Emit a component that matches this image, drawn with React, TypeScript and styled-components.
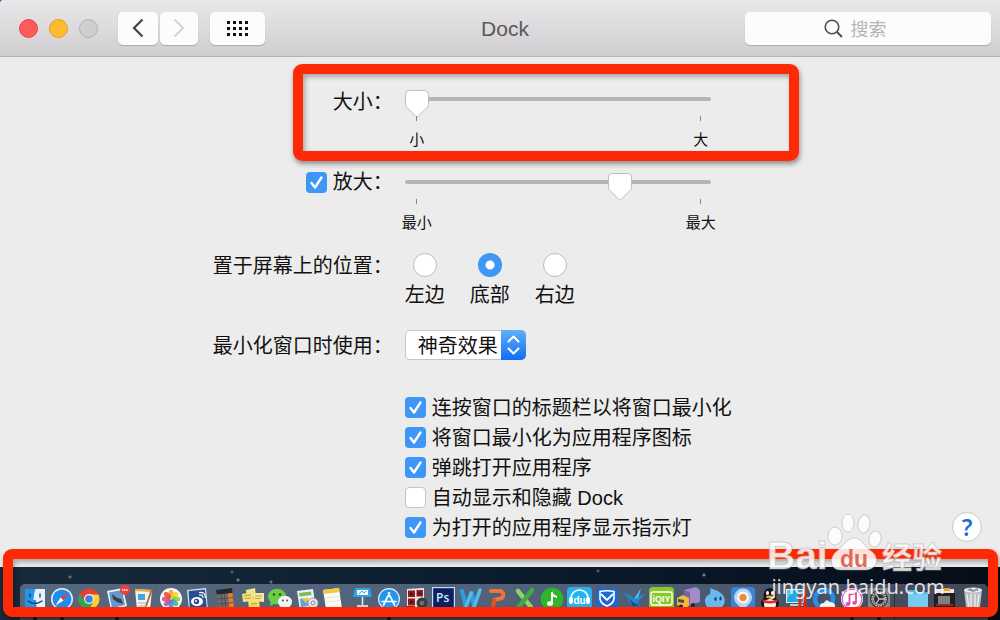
import React, { useState } from "react";
import styled, { createGlobalStyle, css } from "styled-components";

const GlobalStyle = createGlobalStyle`
  *, *::before, *::after { box-sizing: border-box; }
  body { margin: 0; background: #2b4a63; }
  button, input, select { font: inherit; margin: 0; }
`;

const cjk = `"Liberation Sans", "Noto Sans CJK SC", sans-serif`;
const blue = "#3e97f6";
const red = "#fe2a05";

const Page = styled.div`
  display: flex;
  flex-direction: column;
  min-height: 100vh;
  font: 20px/20px ${cjk};
  color: #111;
`;

/* ---------- title bar ---------- */

const TitleBar = styled.header`
  display: grid;
  grid-template-columns: 1fr auto 1fr;
  align-items: center;
  height: 57px;
  padding: 0 9px 0 19px;
  border-bottom: 1px solid #b3b1b3;
  border-top-left-radius: 3px;
  background: linear-gradient(#e9e7e9, #d0ced0);
`;

const BarGroup = styled.div`
  display: flex;
  align-items: center;
`;

const Lights = styled.div`
  display: flex;
  gap: 11px;
  margin-right: 20px;
`;

const Light = styled.button<{ $fill: string; $edge: string }>`
  width: 19px;
  height: 19px;
  padding: 0;
  border: 1px solid ${(p) => p.$edge};
  border-radius: 50%;
  background: ${(p) => p.$fill};
`;

const BarButton = styled.button<{ $width: number; $gap?: number }>`
  display: grid;
  place-items: center;
  width: ${(p) => p.$width}px;
  height: 33px;
  margin-right: ${(p) => p.$gap ?? 0}px;
  padding: 0;
  border: 0;
  border-radius: 5px;
  background: #fcfcfc;
  box-shadow: 0 1px 1px rgba(0, 0, 0, 0.2);
`;

const Title = styled.h1`
  margin: 0;
  padding-top: 2px;
  font-size: 21px;
  font-weight: 400;
  line-height: 24px;
  color: #5a585a;
`;

const Search = styled.label`
  display: flex;
  align-items: center;
  justify-content: center;
  justify-self: end;
  gap: 8px;
  width: 246px;
  height: 33px;
  border-radius: 5px;
  background: #fcfcfc;
  box-shadow: 0 1px 1px rgba(0, 0, 0, 0.2);
`;

const SearchInput = styled.input`
  width: 62px;
  padding: 3px 0 0;
  border: 0;
  outline: 0;
  background: none;
  font-size: 18px;
  line-height: 24px;
  &::placeholder { color: #b4b4b4; opacity: 1; }
`;

/* ---------- settings form ---------- */

const Main = styled.main`
  flex: 1;
  padding: 33px 0 25px;
  background: #ececec;
`;

const Row = styled.div<{ $top?: number }>`
  display: grid;
  grid-template-columns: minmax(0, 2fr) minmax(0, 3fr);
  column-gap: 8px;
  margin-top: ${(p) => p.$top ?? 0}px;
`;

const RowLabel = styled.div<{ $line: number }>`
  display: flex;
  justify-content: flex-end;
  align-items: center;
  gap: 6px;
  height: ${(p) => p.$line}px;
  padding-right: 4px;
  white-space: nowrap;
`;

const Control = styled.div`
  position: relative;
`;

const Mark = styled.div`
  position: absolute;
  border: 10px solid ${red};
  border-radius: 9px;
  box-shadow: 1px 3px 5px rgba(0, 0, 0, 0.4), inset 2px 3px 5px rgba(0, 0, 0, 0.3);
  pointer-events: none;
`;

const SizeMark = styled(Mark)`
  top: -26px;
  left: -112px;
  width: 506px;
  height: 97px;
`;

const thumb = `url("data:image/svg+xml,%3Csvg xmlns='http://www.w3.org/2000/svg' width='24' height='28'%3E%3Cpath d='M4.500.5H19.500Q23.500.5 23.500 4.500V14.500Q23.500 16 22.500 17L13 26.500Q12 27.500 11 26.500L1.500 17Q.5 16 .5 14.500V4.500Q.5.5 4.500.5Z' fill='white' stroke='%23bdbdbd'/%3E%3C/svg%3E")`;

const Range = styled.input`
  display: block;
  width: 306px;
  height: 18px;
  appearance: none;
  background: none;
  &::-webkit-slider-runnable-track {
    height: 4px;
    border-radius: 2px;
    background: #b5b5b5;
  }
  &::-webkit-slider-thumb {
    appearance: none;
    width: 24px;
    height: 28px;
    margin-top: -7px;
    background: ${thumb} no-repeat;
  }
`;

const Scale = styled.div`
  display: flex;
  justify-content: space-between;
  width: 308px;
  margin-top: 8px;
  font-size: 15px;
`;

const ScaleEnd = styled.span`
  display: flex;
  flex-direction: column;
  align-items: center;
  gap: 9px;
  width: 24px;
  white-space: nowrap;
  &::before {
    content: "";
    width: 1px;
    height: 5px;
    background: #858585;
  }
`;

const tick = `url("data:image/svg+xml,%3Csvg xmlns='http://www.w3.org/2000/svg' viewBox='0 0 21 21'%3E%3Cpath d='M5.500 11L9 15.500L15.500 5.500' fill='none' stroke='white' stroke-width='2.400' stroke-linecap='round' stroke-linejoin='round'/%3E%3C/svg%3E")`;

const Check = styled.input`
  flex: none;
  width: 21px;
  height: 21px;
  appearance: none;
  border: 1px solid #c4c4c4;
  border-radius: 4px;
  background: #fff;
  &:checked {
    border: 0;
    background: ${blue} ${tick} center / 21px no-repeat;
  }
`;

const Radios = styled.div`
  display: flex;
  gap: 25px;
`;

const RadioOption = styled.label`
  display: flex;
  flex-direction: column;
  align-items: center;
  gap: 6px;
  line-height: 24px;
`;

const Radio = styled.input`
  width: 24px;
  height: 24px;
  appearance: none;
  border: 1px solid #bcbcbc;
  border-radius: 50%;
  background: #fff;
  &:checked {
    border: 0;
    background: radial-gradient(circle, #fff 4px, ${blue} 5px);
  }
`;

const SelectBox = styled.div`
  position: relative;
  width: 121px;
  height: 30px;
`;

const Select = styled.select`
  width: 100%;
  height: 100%;
  padding: 1px 0 0 12px;
  appearance: none;
  border: 1px solid #c6c6c6;
  border-radius: 5px;
  background: #fff;
  color: #111;
`;

const SelectArrows = styled.span`
  position: absolute;
  inset: 0 0 0 auto;
  display: grid;
  place-items: center;
  width: 25px;
  border-radius: 0 5px 5px 0;
  background: linear-gradient(#62aef8, #0f6ff6);
  pointer-events: none;
`;

const OptionsCell = styled.div`
  display: flex;
  justify-content: space-between;
  align-items: flex-end;
  padding-right: 18px;
`;

const Options = styled.div`
  display: flex;
  flex-direction: column;
`;

const Option = styled.label`
  display: flex;
  align-items: center;
  gap: 6px;
  height: 30px;
`;

const OptionText = styled.span`
  padding-top: 2px;
`;

const Help = styled.button`
  width: 30px;
  height: 30px;
  padding: 0;
  border: 1px solid #c8c8c8;
  border-radius: 50%;
  background: #fff;
  color: #1470d2;
  font: 600 23px/28px "Noto Sans", sans-serif;
`;

/* ---------- desktop and dock ---------- */

const Desktop = styled.footer`
  position: relative;
  padding: 17px 12px 0 20px;
  background:
    radial-gradient(circle at 70px 10px, #5c6f7e 0 1px, transparent 2px),
    radial-gradient(circle at 238px 13px, #6b7c8a 0 1px, transparent 2px),
    radial-gradient(circle at 232px 5px, #465a6a 0 1px, transparent 2px),
    radial-gradient(circle at 271px 15px, #5c6f7e 0 1px, transparent 2px),
    radial-gradient(circle at 704px 8px, #6b7c8a 0 1px, transparent 2px),
    radial-gradient(circle at 598px 4px, #465a6a 0 1px, transparent 2px),
    linear-gradient(90deg, #172a3b, #0b1c2e 50%, #060d18);
`;

const Dock = styled.nav`
  display: flex;
  justify-content: space-between;
  height: 36px;
  padding: 2px 3px 0;
  border-radius: 5px 5px 0 0;
  background:
    linear-gradient(transparent 31px, #4b4152 31px),
    linear-gradient(90deg, #56687e, #4f6078 60%, #414757);
`;

const DockItem = styled.button<{ $running?: boolean }>`
  position: relative;
  display: flex;
  align-items: flex-start;
  width: 24px;
  height: 34px;
  padding: 0;
  border: 0;
  background: none;
  svg { display: block; overflow: visible; }
  ${(p) =>
    p.$running &&
    css`
      &::after {
        content: "";
        position: absolute;
        bottom: 0;
        left: 10px;
        width: 4px;
        height: 3px;
        border-radius: 2px;
        background: #17131c;
      }
    `}
`;

const Divider = styled.span`
  width: 9px;
  border-left: 1px solid #2b3040;
`;

const DockMark = styled(Mark)`
  top: -18px;
  right: 2px;
  bottom: 3px;
  left: 3px;
`;

const Watermark = styled.div`
  position: absolute;
  right: 52px;
  bottom: 19px;
  width: 180px;
  color: rgba(255, 255, 255, 0.85);
  font: 20px/28px "Noto Sans", sans-serif;
  text-align: center;
  pointer-events: none;
  svg { display: block; overflow: visible; }
`;

type Icon = { name: string; running?: boolean; art: React.ReactNode };

const petals = ["#f7a325", "#f2d22b", "#9bcb3c", "#3fb59a", "#4a8fd8", "#9a63b8", "#d9508f", "#ee4b3a"];

const icons: Icon[] = [
  {
    name: "Finder", running: true, art: (
      <>
        <rect x="2" y="3" width="20" height="20" rx="1" fill="#2396ee" />
        <path d="M12.500 3H22V23H14Q13 19 13 14H10.500Q10.500 8 12.500 3Z" fill="#e6f1fb" />
        <path d="M7 8v3M17 8v3M5 15Q12 20 19 15" fill="none" stroke="#123a66" strokeWidth="1.300" strokeLinecap="round" />
      </>
    ),
  },
  {
    name: "Safari", running: true, art: (
      <>
        <circle cx="12" cy="13" r="11" fill="#e8edf2" />
        <circle cx="12" cy="13" r="9.500" fill="#1f8df0" />
        <path d="M18.500 6.500L13.500 14.500L10.500 11.500Z" fill="#f23a30" />
        <path d="M5.500 19.500L10.500 11.500L13.500 14.500Z" fill="#fff" />
      </>
    ),
  },
  {
    name: "Chrome", art: (
      <>
        <circle cx="12" cy="13" r="10.500" fill="#e8402f" />
        <path d="M2.900 7.750A10.500 10.500 0 0 0 12 23.500L16.500 15.500L7.500 15.500Z" fill="#2ea84f" />
        <path d="M12 23.500A10.500 10.500 0 0 0 21.500 8.500H12L16.500 15.500Z" fill="#fbd02e" />
        <circle cx="12" cy="13" r="5" fill="#f4f4f4" />
        <circle cx="12" cy="13" r="3.800" fill="#3f7fe8" />
      </>
    ),
  },
  {
    name: "Mail", running: true, art: (
      <>
        <path d="M2 5L18 2L22 20L6 24Z" fill="#eef2f5" />
        <path d="M4 6.500L17 4L20 19L7 22Z" fill="#5b9ad2" />
        <path d="M7 8L12 12L16 13L18 18L12 16L8 13Z" fill="#4a3a33" />
        <circle cx="20" cy="4" r="5" fill="#f23c3c" />
        <path d="M17 4h6" stroke="#ffc9c4" strokeWidth="2" strokeDasharray="1.500 .6" />
      </>
    ),
  },
  {
    name: "Pages", art: (
      <>
        <path d="M3 3L20 4L18 24H5Z" fill="#f7f3e8" />
        <path d="M3 3L20 4V6L3 5Z" fill="#f0a53a" />
        <rect x="6" y="8" width="7" height="6" fill="#48a4dd" />
        <path d="M6 17h9M6 20h8" stroke="#a9b2b8" />
        <path d="M21 3L15 20L13 22L13.500 19L19 3Z" fill="#b06b32" />
      </>
    ),
  },
  {
    name: "Photos", art: (
      <>
        <circle cx="12" cy="13" r="11" fill="#fafafa" />
        {petals.map((c, i) => (
          <ellipse key={c} cx="12" cy="8" rx="2.600" ry="4.300" fill={c} opacity=".9" transform={`rotate(${i * 45} 12 13)`} />
        ))}
      </>
    ),
  },
  {
    name: "Weibo", art: (
      <>
        <path d="M1 4L20 2L22 24H3Z" fill="#dfe7f2" />
        <path d="M2.500 5L19 3.500L21 24H4Z" fill="#284f93" />
        <ellipse cx="11" cy="15.500" rx="6" ry="4.500" fill="#fff" />
        <circle cx="10.500" cy="15.500" r="2.700" fill="#284f93" />
        <circle cx="10" cy="15" r="1" fill="#fff" />
        <path d="M13 9Q17 8 17 12M13 6.500Q19.500 5.500 19.500 12" fill="none" stroke="#fff" strokeWidth="1.200" />
      </>
    ),
  },
  {
    name: "Calculator", art: (
      <>
        <path d="M2 4L18 2L20 24H5Z" fill="#6c6c6e" />
        <path d="M2 4L18 2L18.500 7L2.700 8.500Z" fill="#26282b" />
        <path d="M14 7.500L18.500 7L20 24H15.500Z" fill="#ed7f27" />
        <path d="M3.500 13L19 11.500M4.300 18L19.500 16.500M7 8L9 24M10.500 8L12 24" stroke="#444" strokeWidth=".7" />
      </>
    ),
  },
  {
    name: "Stickies", art: (
      <>
        <path d="M5 4L14 2L15 10L6 12Z" fill="#f6e68a" />
        <path d="M7 14L18 13L19 24H8Z" fill="#f1da62" />
        <path d="M1 8L12 6L13 15L2 16Z" fill="#f5e27a" />
        <path d="M12 7H23V16L13 15Z" fill="#f8eb96" />
        <path d="M3 10L10 9M3.500 12.500L10 12M14 10h7M14 12.500h6M10 18l6-.5" stroke="#a48f38" strokeWidth=".8" />
      </>
    ),
  },
  {
    name: "WeChat", art: (
      <>
        <ellipse cx="9" cy="10.500" rx="9" ry="7.800" fill="#68cf43" />
        <path d="M3 15L2 20L8 17Z" fill="#68cf43" />
        <circle cx="6" cy="8.500" r="1.200" fill="#1f5216" />
        <circle cx="12" cy="8.500" r="1.200" fill="#1f5216" />
        <ellipse cx="17" cy="16" rx="7" ry="6.200" fill="#f3f4f4" />
        <circle cx="14.800" cy="14.500" r="1" fill="#555" />
        <circle cx="19.200" cy="14.500" r="1" fill="#555" />
      </>
    ),
  },
  {
    name: "Preview", art: (
      <>
        <path d="M2 5L18 3L21 23L5 25Z" fill="#f0f2ee" />
        <path d="M4 7L16 5.500L16.500 9L4.500 10.500Z" fill="#7dbb5a" />
        <path d="M5 13L13 12L14 20L6 21Z" fill="#5aa5e0" />
        <path d="M6 12L11 17L14 12Z" fill="#edc84a" />
        <circle cx="18" cy="17" r="5" fill="#e9eaec" stroke="#9ba0a6" />
        <circle cx="18" cy="17" r="2" fill="none" stroke="#888" />
      </>
    ),
  },
  {
    name: "Notes", art: (
      <>
        <path d="M1 4L17 2L20 23H4Z" fill="#fbfaf3" />
        <path d="M1 4L17 2L17.600 6L1.600 8Z" fill="#f4c73d" />
        <path d="M3 12L18 10.500M3.500 16L18.500 14.500" stroke="#dedbd0" strokeWidth=".7" />
      </>
    ),
  },
  {
    name: "Keynote", art: (
      <>
        <path d="M5 2H20L22 11H3Z" fill="#2fa0ea" />
        <path d="M7 4H18V9H7Z" fill="#f4f8fa" />
        <path d="M9 8l3-3 2 2 2-2" fill="none" stroke="#42b5a0" />
        <path d="M12.500 11V22" stroke="#e0e4e7" strokeWidth="1.600" />
        <path d="M7 20h11" stroke="#ced4d9" strokeWidth="2" />
      </>
    ),
  },
  {
    name: "App Store", running: true, art: (
      <>
        <circle cx="12" cy="13" r="11" fill="#e5ecf2" />
        <circle cx="12" cy="13" r="9.800" fill="#2196ee" />
        <path d="M6.500 19L12.500 7M17.500 19L11.500 7M5 15.500H19" fill="none" stroke="#fff" strokeWidth="1.700" strokeLinecap="round" />
      </>
    ),
  },
  {
    name: "Photo Booth", art: (
      <>
        <path d="M3 3L20 2L20 20L3 22Z" fill="#efe4df" />
        <path d="M4 4.500H11V11H4ZM12.500 4H19V10.500H12.500ZM4 12.500H11V19.500H4Z" fill="#8d1d1d" />
        <path d="M1 20h10v4H1z" fill="#a32624" />
        <path d="M6 9Q7.500 4 9 9M14 8.500Q15.500 4 17 8.500M6 17Q7.500 12 9 17" fill="#211517" />
        <circle cx="18" cy="17" r="5.500" fill="#3b3b3e" />
        <circle cx="18" cy="17" r="2.300" fill="#6f7379" />
      </>
    ),
  },
  {
    name: "Photoshop", art: (
      <>
        <rect x="1" y="1" width="23" height="23" fill="#c3dcf3" />
        <rect x="2.200" y="2.200" width="20.600" height="21" fill="#0c1f63" />
        <text x="5" y="16" fontFamily="Open Sans, sans-serif" fontWeight="600" fontSize="12" fill="#d5ebff">Ps</text>
      </>
    ),
  },
  {
    name: "Word", art: (
      <>
        <path d="M3 5L7 21M13 7L15 21" stroke="#2f9ddb" strokeWidth="4.200" strokeLinecap="round" />
        <path d="M7 21L12 7M15 21L21 4" stroke="#52b9ec" strokeWidth="3.600" strokeLinecap="round" />
      </>
    ),
  },
  {
    name: "PowerPoint", art: (
      <>
        <path d="M5 5H15Q19 8 16 12L8 14" fill="none" stroke="#f0733b" strokeWidth="4" strokeLinejoin="round" strokeLinecap="round" />
        <path d="M8 14L7 22" stroke="#d9542a" strokeWidth="4" strokeLinecap="round" />
      </>
    ),
  },
  {
    name: "Excel", art: (
      <>
        <path d="M5 5L18 21" stroke="#8ed467" strokeWidth="4.500" strokeLinecap="round" />
        <path d="M19 4L5 22" stroke="#45a846" strokeWidth="4.500" strokeLinecap="round" />
      </>
    ),
  },
  {
    name: "QQ Music", art: (
      <>
        <circle cx="12" cy="13" r="11.300" fill="#2fb52a" />
        <path d="M12 6V17" stroke="#fff" strokeWidth="2" />
        <path d="M12 5Q13 9 17 10V12Q13 11 12 9Z" fill="#fff" />
        <ellipse cx="10" cy="17.500" rx="3" ry="2.300" fill="#fff" />
      </>
    ),
  },
  {
    name: "Baidu Music", art: (
      <>
        <rect x="0" y="1" width="25" height="23" rx="4" fill="#25b4ed" />
        <path d="M4 14V12A8.500 8 0 0 1 21 12V14" fill="none" stroke="#fff" strokeWidth="1.500" />
        <rect x="2" y="11" width="4" height="7" rx="2" fill="#fff" />
        <rect x="19" y="11" width="4" height="7" rx="2" fill="#fff" />
        <text x="6.500" y="18" fontFamily="Liberation Sans, sans-serif" fontWeight="700" fontSize="10" fill="#fff">du</text>
      </>
    ),
  },
  {
    name: "Guard", art: (
      <>
        <rect x="1" y="2" width="22" height="23" rx="4" fill="#1d68d3" />
        <path d="M5 5.500Q12 4 19 5.500V13Q18 18 12 20Q6 18 5 13Z" fill="none" stroke="#fff" strokeWidth="1.600" />
        <path d="M6 8L12 14L18 8" fill="none" stroke="#fff" strokeWidth="1.800" />
      </>
    ),
  },
  {
    name: "Thunder", art: (
      <>
        <path d="M0 7L8 9L12 13L19 2L17 10L23 8L16 16L19 20L11 20L7 15L6 11Z" fill="#2387cf" />
        <path d="M12 13L19 2L16 12Z" fill="#54b7ee" />
        <path d="M7 12L12 17L18 19L11 20Z" fill="#124b86" />
      </>
    ),
  },
  {
    name: "iQIYI", art: (
      <>
        <rect x="0" y="1" width="25" height="24" rx="4" fill="#8ac72b" />
        <rect x="2" y="6" width="21" height="13" rx="2" fill="none" stroke="#fff" strokeWidth="1.400" />
        <text x="3.500" y="16" fontFamily="Liberation Sans, sans-serif" fontWeight="700" fontSize="9" fill="#fff">iQIY</text>
      </>
    ),
  },
  {
    name: "Transmit", art: (
      <>
        <path d="M8 4L20 1L24 4V16L14 19L8 14Z" fill="#a28bc7" />
        <path d="M8 4L14 6V19L8 14Z" fill="#7a62a5" />
        <path d="M1 12L7 9L13 12V20L9 22L1 19Z" fill="#f2bb36" />
        <path d="M2 13L8 14V17L2 16Z" fill="#4a4a52" />
        <circle cx="5" cy="20.500" r="2" fill="#222" />
        <circle cx="17" cy="19" r="2" fill="#222" />
      </>
    ),
  },
  {
    name: "Droplet", art: (
      <>
        <path d="M7 2Q14 4 19 8Q24 14 20 20Q16 25 10 24Q2 22 2 15Q2 10 7 8Q8 5 7 2Z" fill="#6bb8ef" />
        <ellipse cx="12.500" cy="13" rx="1.100" ry="2" fill="#1c3b63" />
        <ellipse cx="17.500" cy="12.500" rx="1.100" ry="2" fill="#1c3b63" />
      </>
    ),
  },
  {
    name: "Maps", art: (
      <>
        <rect x="0" y="1" width="24" height="24" rx="4" fill="#3a83d6" />
        <path d="M12 2.500A9 9 0 0 1 19 17L12 24L5 17A9 9 0 0 1 12 2.500Z" fill="#b7d6f2" />
        <circle cx="12" cy="11.500" r="6" fill="#f3f7fa" />
        <circle cx="12" cy="11.500" r="3.600" fill="#ee8a2f" />
      </>
    ),
  },
  {
    name: "QQ", art: (
      <>
        <ellipse cx="12" cy="17" rx="9" ry="7" fill="#15161a" />
        <ellipse cx="12" cy="9" rx="6.500" ry="7" fill="#15161a" />
        <ellipse cx="12" cy="18.500" rx="6" ry="5.500" fill="#f4f4f4" />
        <ellipse cx="9.500" cy="7" rx="1.500" ry="2" fill="#fff" />
        <ellipse cx="14.500" cy="7" rx="1.500" ry="2" fill="#fff" />
        <ellipse cx="12" cy="11" rx="4" ry="1.400" fill="#f3a321" />
        <path d="M4.500 13Q12 17 19.500 13L19 16Q12 19 5 16Z" fill="#e32a25" />
      </>
    ),
  },
  {
    name: "Remote Desktop", art: (
      <>
        <rect x="1" y="3" width="20" height="14" fill="#e8eef2" />
        <rect x="2" y="4" width="16" height="12" fill="#25a9dc" />
        <path d="M2 4H9L2 13Z" fill="#5bc9f0" />
        <path d="M5 19h13" stroke="#c4cbd0" strokeWidth="2" />
        <path d="M15 8V24M20 2V24" stroke="#d32b25" strokeWidth="3" />
      </>
    ),
  },
  {
    name: "QQ Browser", art: (
      <>
        <circle cx="12" cy="13" r="9" fill="none" stroke="#258ee8" strokeWidth="4.500" />
        <path d="M8 22Q7 17 12 17Q14 12 18 16Q24 16 23 22Z" fill="#f3f7fb" />
      </>
    ),
  },
  {
    name: "iTunes", running: true, art: (
      <>
        <circle cx="12" cy="13" r="11" fill="#f9eef6" />
        <circle cx="12" cy="13" r="9.800" fill="#fff" stroke="#df5bc0" strokeWidth="1.200" />
        <path d="M9.500 18V8.500L16 7V16.500" fill="none" stroke="#e94b93" strokeWidth="1.800" />
        <ellipse cx="8" cy="18" rx="2.300" ry="1.900" fill="#bb58dc" />
        <ellipse cx="14.500" cy="16.800" rx="2.300" ry="1.900" fill="#e94b93" />
      </>
    ),
  },
  {
    name: "System Preferences", running: true, art: (
      <>
        <rect x="1" y="2" width="22" height="23" rx="3" fill="#85878b" />
        <circle cx="12" cy="13" r="9" fill="#2d2e31" />
        <circle cx="12" cy="13" r="7" fill="none" stroke="#c3c5c8" strokeWidth="1.600" strokeDasharray="1.800 .8" />
        <circle cx="12" cy="13" r="5.500" fill="none" stroke="#aeb0b4" />
        <path d="M12 13L18 13M12 13L9 8M12 13L9 18" stroke="#c3c5c8" strokeWidth="1.300" />
      </>
    ),
  },
];

const places: Icon[] = [
  {
    name: "Documents", art: (
      <>
        <path d="M2 4H10L12 6H22V24H2Z" fill="#58b3e3" />
        <rect x="2" y="8" width="20" height="16" fill="#77cbf1" />
      </>
    ),
  },
  {
    name: "Downloads", art: (
      <>
        <rect x="2" y="3" width="19" height="21" fill="#e9e4d5" />
        <path d="M11 2H17V5H11Z" fill="#e7a22f" />
        <rect x="1" y="7" width="21" height="14" fill="#221d1e" />
        <rect x="5" y="10" width="12" height="8" fill="#7c8084" />
        <path d="M3 19h17" stroke="#a33a2c" strokeWidth="1.500" />
      </>
    ),
  },
  {
    name: "Trash", art: (
      <>
        <path d="M3 4H21L18.500 25H5.500Z" fill="#b9bdc1" />
        <path d="M6 8L8 23M10 8V23M14 8V23M18 8L16 23" stroke="#f0f2f3" strokeWidth="1.300" />
        <ellipse cx="12" cy="4" rx="9" ry="2.400" fill="#eef0f1" />
        <path d="M6 4L9 2L13 4L16 2L18 4L12 6Z" fill="#8f9499" />
      </>
    ),
  },
];

const toggles = [
  { id: "dbl", text: "连按窗口的标题栏以将窗口最小化", on: true },
  { id: "into", text: "将窗口最小化为应用程序图标", on: true },
  { id: "bounce", text: "弹跳打开应用程序", on: true },
  { id: "hide", text: "自动显示和隐藏 Dock", on: false },
  { id: "lights", text: "为打开的应用程序显示指示灯", on: true },
];

type SliderProps = { id: string; label: string; initial: number; min: string; max: string };

function Slider({ id, label, initial, min, max }: SliderProps) {
  const [value, setValue] = useState(initial);
  return (
    <>
      <Range id={id} type="range" aria-label={label} value={value} onChange={(e) => setValue(Number(e.target.value))} />
      <Scale>
        <ScaleEnd>{min}</ScaleEnd>
        <ScaleEnd>{max}</ScaleEnd>
      </Scale>
    </>
  );
}

function DockIcon({ icon }: { icon: Icon }) {
  return (
    <DockItem $running={icon.running} aria-label={icon.name}>
      <svg width="24" height="24" viewBox="0 0 24 24" aria-hidden="true">{icon.art}</svg>
    </DockItem>
  );
}

export default function App() {
  return (
    <Page>
      <GlobalStyle />
      <TitleBar>
        <BarGroup>
          <Lights>
            <Light $fill="#fc5b57" $edge="#dd4a48" aria-label="关闭" />
            <Light $fill="#fdbc2e" $edge="#dda02b" aria-label="最小化" />
            <Light $fill="#d0cfd0" $edge="#b4b3b4" aria-label="缩放" />
          </Lights>
          <BarButton $width={40} $gap={2} aria-label="后退">
            <svg width="12" height="20" viewBox="0 0 12 20" fill="none" stroke="#444" strokeWidth="2.200">
              <path d="M10.500 1.500L2 10L10.500 18.500" />
            </svg>
          </BarButton>
          <BarButton $width={38} $gap={12} aria-label="前进">
            <svg width="12" height="20" viewBox="0 0 12 20" fill="none" stroke="#d4d4d4" strokeWidth="2">
              <path d="M1.500 1.500L10 10L1.500 18.500" />
            </svg>
          </BarButton>
          <BarButton $width={55} aria-label="全部显示">
            <svg width="21" height="15" viewBox="0 0 21 15" fill="#111">
              {[0, 6, 12].map((y) => [0, 6, 12, 18].map((x) => <rect key={`${x}-${y}`} x={x} y={y} width="3" height="3" />))}
            </svg>
          </BarButton>
        </BarGroup>
        <Title>Dock</Title>
        <Search>
          <svg width="19" height="19" viewBox="0 0 19 19" fill="none" stroke="#4f4f4f" strokeWidth="1.600">
            <circle cx="8" cy="8" r="6.800" />
            <path d="M12.800 12.800L18 18" strokeWidth="2" />
          </svg>
          <SearchInput placeholder="搜索" aria-label="搜索" />
        </Search>
      </TitleBar>

      <Main>
        <Row>
          <RowLabel $line={24} as="label" htmlFor="size">大小：</RowLabel>
          <Control>
            <SizeMark />
            <Slider id="size" label="大小" initial={0} min="小" max="大" />
          </Control>
        </Row>
        <Row $top={23}>
          <RowLabel $line={18} as="label">
            <Check type="checkbox" defaultChecked />
            放大：
          </RowLabel>
          <Control>
            <Slider id="zoom" label="放大" initial={72} min="最小" max="最大" />
          </Control>
        </Row>
        <Row $top={20} role="radiogroup" aria-labelledby="place">
          <RowLabel $line={26} id="place">置于屏幕上的位置：</RowLabel>
          <Radios>
            {["左边", "底部", "右边"].map((side) => (
              <RadioOption key={side}>
                <Radio type="radio" name="side" defaultChecked={side === "底部"} />
                {side}
              </RadioOption>
            ))}
          </Radios>
        </Row>
        <Row $top={23}>
          <RowLabel $line={32} as="label" htmlFor="effect">最小化窗口时使用：</RowLabel>
          <SelectBox>
            <Select id="effect"><option>神奇效果</option></Select>
            <SelectArrows>
              <svg width="13" height="20" viewBox="0 0 13 20" fill="none" stroke="#fff" strokeWidth="2" strokeLinecap="round" strokeLinejoin="round">
                <path d="M1.500 6.500L6.500 1.500L11.500 6.500M1.500 13.500L6.500 18.500L11.500 13.500" />
              </svg>
            </SelectArrows>
          </SelectBox>
        </Row>
        <Row $top={30}>
          <span />
          <OptionsCell>
            <Options>
              {toggles.map((t) => (
                <Option key={t.id}>
                  <Check type="checkbox" defaultChecked={t.on} />
                  <OptionText>{t.text}</OptionText>
                </Option>
              ))}
            </Options>
            <Help aria-label="帮助">?</Help>
          </OptionsCell>
        </Row>
      </Main>

      <Desktop>
        <Dock>
          {icons.map((i) => <DockIcon key={i.name} icon={i} />)}
          <Divider />
          {places.map((i) => <DockIcon key={i.name} icon={i} />)}
        </Dock>
        <DockMark />
        <Watermark>
          <svg width="180" height="60" viewBox="0 0 180 60" fill="#fff" fillOpacity=".85" stroke="#aaa" strokeOpacity=".5">
            <text x="-1" y="56" fontFamily="Liberation Sans, sans-serif" fontWeight="700" fontSize="39">Bai</text>
            <ellipse cx="67" cy="23" rx="7" ry="9" />
            <ellipse cx="80" cy="10" rx="6" ry="9" />
            <ellipse cx="96" cy="11" rx="6" ry="9" transform="rotate(8 96 11)" />
            <ellipse cx="107" cy="26" rx="6" ry="8" transform="rotate(14 107 26)" />
            <path d="M86 25C94 25 96 33 103 38C111 43 111 56 98 57H73C61 57 61 44 69 38C76 33 78 25 86 25Z" />
            <text x="72" y="54" fontFamily="Liberation Sans, sans-serif" fontWeight="700" fontSize="23" fill="#d9513f" stroke="none">du</text>
            <text x="114" y="55" fontFamily="Noto Sans CJK SC, sans-serif" fontWeight="700" fontSize="30">经验</text>
          </svg>
          jingyan.baidu.com
        </Watermark>
      </Desktop>
    </Page>
  );
}
